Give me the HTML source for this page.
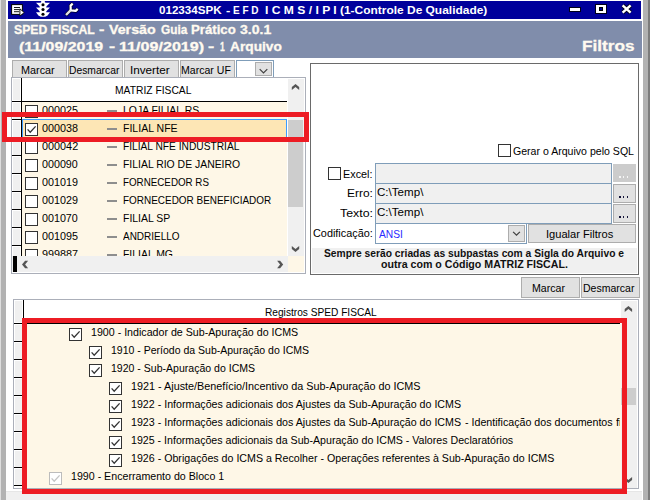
<!DOCTYPE html>
<html><head><meta charset="utf-8"><title>SPED FISCAL</title>
<style>
html,body{margin:0;padding:0;background:#fff;}
body{width:650px;height:500px;position:relative;overflow:hidden;font-family:"Liberation Sans",sans-serif;}
.r{position:absolute;box-sizing:content-box;}
.t{position:absolute;white-space:nowrap;line-height:20px;transform-origin:0 0;font-family:"Liberation Sans",sans-serif;}
</style></head><body>
<div class="r" style="left:0px;top:0px;width:650px;height:500px;background:#ffffff;"></div>
<div class="r" style="left:0px;top:0px;width:1px;height:500px;background:#dedede;"></div>
<div class="r" style="left:1px;top:0px;width:5px;height:500px;background:#b2b2b2;"></div>
<div class="r" style="left:643px;top:0px;width:5px;height:500px;background:#b2b2b2;"></div>
<div class="r" style="left:648px;top:0px;width:2px;height:500px;background:#7c7c7c;"></div>
<div class="r" style="left:8px;top:1px;width:633px;height:18px;background:#00009b;"></div>
<div class="r" style="left:8px;top:21px;width:634px;height:37px;background:#808dab;"></div>
<div class="r" style="left:6px;top:491px;width:636px;height:9px;background:#f0f0f0;"></div>
<div class="r" style="left:6px;top:491px;width:636px;height:1px;background:#e6e6e6;"></div>
<span class="t" style="left:159.00px;top:0.00px;font-size:11px;font-weight:bold;color:#ffffff;transform:scaleX(1.0548);">012334SPK</span>
<span class="t" style="left:226.00px;top:0.00px;font-size:11px;font-weight:bold;color:#ffffff;transform:scaleX(1.1870);">-</span>
<span class="t" style="left:233.00px;top:0.00px;font-size:11px;font-weight:bold;color:#ffffff;transform:scaleX(0.9087);">E F D</span>
<span class="t" style="left:265.00px;top:0.00px;font-size:11px;font-weight:bold;color:#ffffff;transform:scaleX(1.1002);">I C M S / I P I</span>
<span class="t" style="left:340.00px;top:0.00px;font-size:11px;font-weight:bold;color:#ffffff;transform:scaleX(1.0856);">(1-Controle De Qualidade)</span>
<span class="t" style="left:14.00px;top:20.00px;font-size:12.5px;font-weight:bold;color:#fffaf0;transform:scaleX(0.9763);-webkit-text-stroke:0.3px #fffaf0;">SPED FISCAL</span>
<span class="t" style="left:99.00px;top:20.00px;font-size:12.5px;font-weight:bold;color:#fffaf0;transform:scaleX(1.2962);-webkit-text-stroke:0.3px #fffaf0;">-</span>
<span class="t" style="left:109.00px;top:20.00px;font-size:12.5px;font-weight:bold;color:#fffaf0;transform:scaleX(1.1376);-webkit-text-stroke:0.3px #fffaf0;">Versão</span>
<span class="t" style="left:161.00px;top:20.00px;font-size:12.5px;font-weight:bold;color:#fffaf0;transform:scaleX(0.9477);-webkit-text-stroke:0.3px #fffaf0;">Guia</span>
<span class="t" style="left:191.00px;top:20.00px;font-size:12.5px;font-weight:bold;color:#fffaf0;transform:scaleX(1.0554);-webkit-text-stroke:0.3px #fffaf0;">Prático</span>
<span class="t" style="left:240.00px;top:20.00px;font-size:12.5px;font-weight:bold;color:#fffaf0;transform:scaleX(1.1226);-webkit-text-stroke:0.3px #fffaf0;">3.0.1</span>
<span class="t" style="left:19.00px;top:37.00px;font-size:12.5px;font-weight:bold;color:#fffaf0;transform:scaleX(1.2738);-webkit-text-stroke:0.3px #fffaf0;">(11/09/2019</span>
<span class="t" style="left:109.00px;top:37.00px;font-size:12.5px;font-weight:bold;color:#fffaf0;transform:scaleX(1.4730);-webkit-text-stroke:0.3px #fffaf0;">-</span>
<span class="t" style="left:119.00px;top:37.00px;font-size:12.5px;font-weight:bold;color:#fffaf0;transform:scaleX(1.2894);-webkit-text-stroke:0.3px #fffaf0;">11/09/2019)</span>
<span class="t" style="left:208.00px;top:37.00px;font-size:12.5px;font-weight:bold;color:#fffaf0;transform:scaleX(1.5000);-webkit-text-stroke:0.3px #fffaf0;">-</span>
<span class="t" style="left:220.00px;top:37.00px;font-size:12.5px;font-weight:bold;color:#fffaf0;transform:scaleX(0.6837);-webkit-text-stroke:0.3px #fffaf0;">1</span>
<span class="t" style="left:230.00px;top:37.00px;font-size:12.5px;font-weight:bold;color:#fffaf0;transform:scaleX(1.0984);-webkit-text-stroke:0.3px #fffaf0;">Arquivo</span>
<span class="t" style="left:582.00px;top:36.00px;font-size:15px;font-weight:bold;color:#fffaf0;transform:scaleX(1.1469);-webkit-text-stroke:0.3px #fffaf0;">Filtros</span>
<div class="r" style="left:570px;top:8px;width:10px;height:3px;background:#fff;box-shadow:0 0 0 1px #000018;"></div>
<div class="r" style="left:596px;top:5px;width:4px;height:4px;border:2px solid #fff;border-left-width:3px;border-right-width:3px;box-shadow:inset 0 0 0 1px #000,0 0 0 1px #000018;"></div>
<svg class="r" style="left:618px;top:2px" width="18" height="14" viewBox="0 0 18 14"><path d="M4.6 3.4 L12.6 10.6 M12.6 3.4 L4.6 10.6" stroke="#000018" stroke-width="4.2" fill="none"/><path d="M4.6 3.4 L12.6 10.6 M12.6 3.4 L4.6 10.6" stroke="#fff" stroke-width="2.5" fill="none"/></svg>
<svg class="r" style="left:0;top:0" width="90" height="20" viewBox="0 0 90 20">
<rect x="11.6" y="4.6" width="10.8" height="9.8" fill="#fff" stroke="#000" stroke-width="1"/>
<path d="M14 7.5 H20 M14 9.6 H19.6 M14 11.7 H19.2" stroke="#000" stroke-width="0.9" fill="none"/>
<path d="M19.9 8.9 L24.3 12.5 L19.9 16.1 Z" fill="#fff" stroke="#000" stroke-width="0.9"/>
<g fill="#fff">
<rect x="41.2" y="0" width="3.6" height="4"/>
<rect x="39.8" y="2.2" width="6.4" height="14.6" rx="1.6"/>
<path d="M36 2.8 L40.4 2.8 V7.2 Z M36 7.5 L40.4 7.5 V11.9 Z M36 12.2 L40.4 12.2 V16.6 L38.4 15.6 Z"/>
<path d="M50 2.8 L45.6 2.8 V7.2 Z M50 7.5 L45.6 7.5 V11.9 Z M50 12.2 L45.6 12.2 V16.6 L47.6 15.6 Z"/>
</g>
<g fill="#000"><circle cx="43" cy="4.7" r="1.55"/><circle cx="43" cy="9.5" r="1.55"/><circle cx="43" cy="14.3" r="1.55"/></g>
<g fill="none" stroke-linejoin="round" stroke-linecap="butt">
<path d="M72.9 3.4 L70.6 5.6 L70.7 10.3 L75.7 10.9 L77.9 8.7 M70.5 10.4 L65.8 15.2" stroke="#000020" stroke-width="3.6"/>
<path d="M72.7 3.6 L70.6 5.6 L70.7 10.3 L75.7 10.9 L77.7 8.9" stroke="#fff" stroke-width="2.2"/>
<path d="M70.5 10.4 L66 15" stroke="#e2e2e2" stroke-width="2.4"/>
</g>
</svg>
<div class="r" style="left:12px;top:60px;width:53px;height:16px;background:#e1e1e1;border:1px solid #adadad;"></div>
<span class="t" style="left:21.00px;top:60.00px;font-size:11.5px;color:#000000;transform:scaleX(0.9409);">Marcar</span>
<div class="r" style="left:68px;top:60px;width:53px;height:16px;background:#e1e1e1;border:1px solid #adadad;"></div>
<span class="t" style="left:69.00px;top:60.00px;font-size:11.5px;color:#000000;transform:scaleX(0.8954);">Desmarcar</span>
<div class="r" style="left:124px;top:60px;width:53px;height:16px;background:#e1e1e1;border:1px solid #adadad;"></div>
<span class="t" style="left:130.00px;top:60.00px;font-size:11.5px;color:#000000;transform:scaleX(1.0170);">Inverter</span>
<div class="r" style="left:180px;top:60px;width:53px;height:16px;background:#e1e1e1;border:1px solid #adadad;"></div>
<span class="t" style="left:181.00px;top:60.00px;font-size:11.5px;color:#000000;transform:scaleX(0.9182);">Marcar UF</span>
<div class="r" style="left:236px;top:60px;width:36px;height:16px;background:#fff;border:1px solid #7f9db9;"></div>
<div class="r" style="left:255px;top:62px;width:15px;height:12px;background:#e1e1e1;border:1px solid #adadad;"></div>
<svg class="r" style="left:0;top:0" width="650" height="500"><path d="M259.7 69.1 L263.5 72.9 L267.3 69.1" fill="none" stroke="#404040" stroke-width="1.2"/></svg>
<div class="r" style="left:11px;top:77px;width:293px;height:195px;background:#fff;border:1px solid #abafb9;"></div>
<div class="r" style="left:13px;top:79px;width:7px;height:21px;background:#f0f0f0;"></div>
<div class="r" style="left:21px;top:78px;width:1px;height:178px;background:#000;"></div>
<div class="r" style="left:12px;top:101px;width:275px;height:1px;background:#000;"></div>
<span class="t" style="left:115.00px;top:80.00px;font-size:11px;color:#000000;transform:scaleX(0.9354);">MATRIZ FISCAL</span>
<div class="r" style="left:22px;top:102px;width:265px;height:154px;background:#fef7e7;"></div>
<div class="r" style="left:22px;top:119px;width:263px;height:17px;background:#fde6b5;border:1px solid #3c9bff;"></div>
<div class="r" style="left:12px;top:102px;width:276px;height:154px;overflow:hidden;background:none">
<div class="r" style="left:0px;top:17px;width:9px;height:1px;background:#000;"></div>
<div class="r" style="left:1px;top:1px;width:7px;height:16px;background:#f0f0f0;"></div>
<div class="r" style="left:13px;top:3px;width:11px;height:11px;background:#fff;border:1px solid #333333;"></div>
<span class="t" style="left:30.00px;top:-2.00px;font-size:11px;color:#000000;transform:scaleX(0.9798);">000025</span>
<div class="r" style="left:95px;top:8px;width:10px;height:2px;background:#8e8e8e;"></div>
<span class="t" style="left:111.00px;top:-2.00px;font-size:11px;color:#000000;transform:scaleX(0.9481);">LOJA FILIAL RS</span>
<div class="r" style="left:0px;top:35px;width:9px;height:1px;background:#000;"></div>
<div class="r" style="left:1px;top:19px;width:7px;height:16px;background:#f0f0f0;"></div>
<div class="r" style="left:13px;top:21px;width:11px;height:11px;background:#fff;border:1px solid #333333;"><svg width="11" height="11" viewBox="0 0 11 11" style="position:absolute;left:0;top:0"><path d="M1.6 5.4 L4.2 8.2 L9.6 2.4" fill="none" stroke="#333333" stroke-width="1.3"/></svg></div>
<span class="t" style="left:30.00px;top:16.00px;font-size:11px;color:#000000;transform:scaleX(0.9801);">000038</span>
<div class="r" style="left:95px;top:26px;width:10px;height:2px;background:#8e8e8e;"></div>
<span class="t" style="left:111.00px;top:16.00px;font-size:11px;color:#000000;transform:scaleX(0.9571);">FILIAL NFE</span>
<div class="r" style="left:0px;top:53px;width:9px;height:1px;background:#000;"></div>
<div class="r" style="left:1px;top:37px;width:7px;height:16px;background:#f0f0f0;"></div>
<div class="r" style="left:13px;top:39px;width:11px;height:11px;background:#fff;border:1px solid #333333;"></div>
<span class="t" style="left:30.00px;top:34.00px;font-size:11px;color:#000000;transform:scaleX(0.9851);">000042</span>
<div class="r" style="left:95px;top:44px;width:10px;height:2px;background:#8e8e8e;"></div>
<span class="t" style="left:111.00px;top:34.00px;font-size:11px;color:#000000;transform:scaleX(0.9272);">FILIAL NFE INDUSTRIAL</span>
<div class="r" style="left:0px;top:71px;width:9px;height:1px;background:#000;"></div>
<div class="r" style="left:1px;top:55px;width:7px;height:16px;background:#f0f0f0;"></div>
<div class="r" style="left:13px;top:57px;width:11px;height:11px;background:#fff;border:1px solid #333333;"></div>
<span class="t" style="left:30.00px;top:52.00px;font-size:11px;color:#000000;transform:scaleX(0.9748);">000090</span>
<div class="r" style="left:95px;top:62px;width:10px;height:2px;background:#8e8e8e;"></div>
<span class="t" style="left:111.00px;top:52.00px;font-size:11px;color:#000000;transform:scaleX(0.9472);">FILIAL RIO DE JANEIRO</span>
<div class="r" style="left:0px;top:89px;width:9px;height:1px;background:#000;"></div>
<div class="r" style="left:1px;top:73px;width:7px;height:16px;background:#f0f0f0;"></div>
<div class="r" style="left:13px;top:75px;width:11px;height:11px;background:#fff;border:1px solid #333333;"></div>
<span class="t" style="left:30.00px;top:70.00px;font-size:11px;color:#000000;transform:scaleX(0.9780);">001019</span>
<div class="r" style="left:95px;top:80px;width:10px;height:2px;background:#8e8e8e;"></div>
<span class="t" style="left:111.00px;top:70.00px;font-size:11px;color:#000000;transform:scaleX(0.8903);">FORNECEDOR RS</span>
<div class="r" style="left:0px;top:107px;width:9px;height:1px;background:#000;"></div>
<div class="r" style="left:1px;top:91px;width:7px;height:16px;background:#f0f0f0;"></div>
<div class="r" style="left:13px;top:93px;width:11px;height:11px;background:#fff;border:1px solid #333333;"></div>
<span class="t" style="left:30.00px;top:88.00px;font-size:11px;color:#000000;transform:scaleX(0.9780);">001029</span>
<div class="r" style="left:95px;top:98px;width:10px;height:2px;background:#8e8e8e;"></div>
<span class="t" style="left:111.00px;top:88.00px;font-size:11px;color:#000000;transform:scaleX(0.9044);">FORNECEDOR BENEFICIADOR</span>
<div class="r" style="left:0px;top:125px;width:9px;height:1px;background:#000;"></div>
<div class="r" style="left:1px;top:109px;width:7px;height:16px;background:#f0f0f0;"></div>
<div class="r" style="left:13px;top:111px;width:11px;height:11px;background:#fff;border:1px solid #333333;"></div>
<span class="t" style="left:30.00px;top:106.00px;font-size:11px;color:#000000;transform:scaleX(0.9748);">001070</span>
<div class="r" style="left:95px;top:116px;width:10px;height:2px;background:#8e8e8e;"></div>
<span class="t" style="left:111.00px;top:106.00px;font-size:11px;color:#000000;transform:scaleX(0.9490);">FILIAL SP</span>
<div class="r" style="left:0px;top:143px;width:9px;height:1px;background:#000;"></div>
<div class="r" style="left:1px;top:127px;width:7px;height:16px;background:#f0f0f0;"></div>
<div class="r" style="left:13px;top:129px;width:11px;height:11px;background:#fff;border:1px solid #333333;"></div>
<span class="t" style="left:30.00px;top:124.00px;font-size:11px;color:#000000;transform:scaleX(0.9798);">001095</span>
<div class="r" style="left:95px;top:134px;width:10px;height:2px;background:#8e8e8e;"></div>
<span class="t" style="left:111.00px;top:124.00px;font-size:11px;color:#000000;transform:scaleX(0.9059);">ANDRIELLO</span>
<div class="r" style="left:0px;top:161px;width:9px;height:1px;background:#000;"></div>
<div class="r" style="left:1px;top:145px;width:7px;height:16px;background:#f0f0f0;"></div>
<div class="r" style="left:13px;top:147px;width:11px;height:11px;background:#fff;border:1px solid #333333;"></div>
<span class="t" style="left:30.00px;top:142.00px;font-size:11px;color:#000000;transform:scaleX(0.9802);">999887</span>
<div class="r" style="left:95px;top:152px;width:10px;height:2px;background:#8e8e8e;"></div>
<span class="t" style="left:111.00px;top:142.00px;font-size:11px;color:#000000;transform:scaleX(0.9466);">FILIAL MG</span>
</div>
<div class="r" style="left:288px;top:79px;width:16px;height:177px;background:#f0f0f0;"></div>
<div class="r" style="left:288px;top:120px;width:15px;height:87px;background:#cdcdcd;"></div>
<svg class="r" style="left:0;top:0" width="650" height="500"><polygon points="295.50,83.90 299.20,87.00 299.20,90.00 295.50,87.00 291.80,90.00 291.80,87.00" fill="#555555"/></svg>
<svg class="r" style="left:0;top:0" width="650" height="500"><polygon points="295.50,252.10 299.20,249.00 299.20,246.00 295.50,249.00 291.80,246.00 291.80,249.00" fill="#555555"/></svg>
<div class="r" style="left:12px;top:256px;width:276px;height:16px;background:#f0f0f0;"></div>
<div class="r" style="left:13px;top:256px;width:4px;height:16px;background:#000;"></div>
<div class="r" style="left:288px;top:256px;width:16px;height:16px;background:#fef7e7;"></div>
<svg class="r" style="left:0;top:0" width="650" height="500"><polygon points="22.00,264.50 25.10,268.20 28.10,268.20 25.10,264.50 28.10,260.80 25.10,260.80" fill="#555555"/></svg>
<svg class="r" style="left:0;top:0" width="650" height="500"><polygon points="283.20,264.50 280.10,268.20 277.10,268.20 280.10,264.50 277.10,260.80 280.10,260.80" fill="#555555"/></svg>
<div class="r" style="left:310px;top:63px;width:327px;height:210px;background:#fff;border:1px solid #6a6a6a;"></div>
<div class="r" style="left:312px;top:248px;width:325px;height:25px;background:#f0f0f0;"></div>
<div class="r" style="left:498px;top:144px;width:11px;height:11px;background:#fff;border:1px solid #333333;"></div>
<span class="t" style="left:513.00px;top:141.00px;font-size:11.5px;color:#000000;transform:scaleX(0.9188);">Gerar o Arquivo pelo SQL</span>
<div class="r" style="left:328px;top:167px;width:11px;height:11px;background:#fff;border:1px solid #333333;"></div>
<span class="t" style="left:343.00px;top:164.00px;font-size:11.5px;color:#000000;transform:scaleX(0.9426);">Excel:</span>
<span class="t" style="left:347.00px;top:183.00px;font-size:11.5px;color:#000000;transform:scaleX(1.0370);">Erro:</span>
<span class="t" style="left:340.00px;top:203.00px;font-size:11.5px;color:#000000;transform:scaleX(1.0742);">Texto:</span>
<span class="t" style="left:313.00px;top:223.00px;font-size:11.5px;color:#000000;transform:scaleX(0.9439);">Codificação:</span>
<div class="r" style="left:375px;top:163px;width:235px;height:19px;background:#f0f0f0;border:1px solid #7f9db9;"></div>
<div class="r" style="left:375px;top:183px;width:235px;height:19px;background:#f0f0f0;border:1px solid #7f9db9;"></div>
<div class="r" style="left:375px;top:203px;width:235px;height:19px;background:#f0f0f0;border:1px solid #7f9db9;"></div>
<div class="r" style="left:375px;top:223px;width:150px;height:19px;background:#fff;border:1px solid #7f9db9;"></div>
<span class="t" style="left:377.00px;top:182.00px;font-size:11.5px;color:#000000;transform:scaleX(1.0076);">C:\Temp\</span>
<span class="t" style="left:377.00px;top:202.00px;font-size:11.5px;color:#000000;transform:scaleX(1.0076);">C:\Temp\</span>
<span class="t" style="left:379.00px;top:224.00px;font-size:11px;color:#2a2aff;transform:scaleX(0.9281);">ANSI</span>
<div class="r" style="left:613px;top:164px;width:23px;height:18px;background:#cccccc;"></div>
<div class="r" style="left:619px;top:176px;width:1.5px;height:2px;background:#f6f6f6;"></div>
<div class="r" style="left:622.8px;top:176px;width:1.5px;height:2px;background:#f6f6f6;"></div>
<div class="r" style="left:626.8px;top:176px;width:1.5px;height:2px;background:#f6f6f6;"></div>
<div class="r" style="left:613px;top:184px;width:21px;height:17px;background:#e1e1e1;border:1px solid #adadad;"></div>
<div class="r" style="left:619px;top:196px;width:1.5px;height:2px;background:#15153a;"></div>
<div class="r" style="left:622.8px;top:196px;width:1.5px;height:2px;background:#15153a;"></div>
<div class="r" style="left:626.8px;top:196px;width:1.5px;height:2px;background:#15153a;"></div>
<div class="r" style="left:613px;top:204px;width:21px;height:17px;background:#e1e1e1;border:1px solid #adadad;"></div>
<div class="r" style="left:619px;top:216px;width:1.5px;height:2px;background:#15153a;"></div>
<div class="r" style="left:622.8px;top:216px;width:1.5px;height:2px;background:#15153a;"></div>
<div class="r" style="left:626.8px;top:216px;width:1.5px;height:2px;background:#15153a;"></div>
<div class="r" style="left:508px;top:225px;width:15px;height:15px;background:#e1e1e1;border:1px solid #adadad;"></div>
<svg class="r" style="left:0;top:0" width="650" height="500"><path d="M513.1 231.8 L516.5 235.2 L519.9 231.8" fill="none" stroke="#404040" stroke-width="1.2"/></svg>
<div class="r" style="left:528px;top:224px;width:106px;height:17px;background:#e1e1e1;border:1px solid #adadad;"></div>
<span class="t" style="left:546.00px;top:224.00px;font-size:11.5px;color:#000000;transform:scaleX(0.9659);">Igualar Filtros</span>
<span class="t" style="left:324.00px;top:244.00px;font-size:10px;font-weight:bold;color:#111;transform:scaleX(1.0275);">Sempre serão criadas as subpastas com a Sigla do Arquivo e</span>
<span class="t" style="left:381.00px;top:255.00px;font-size:10px;font-weight:bold;color:#111;transform:scaleX(1.0625);">outra com o Código MATRIZ FISCAL.</span>
<div class="r" style="left:521px;top:277px;width:57px;height:19px;background:#e1e1e1;border:1px solid #adadad;"></div>
<span class="t" style="left:532.00px;top:278.00px;font-size:11.5px;color:#000000;transform:scaleX(0.9206);">Marcar</span>
<div class="r" style="left:581px;top:277px;width:57px;height:19px;background:#e1e1e1;border:1px solid #adadad;"></div>
<span class="t" style="left:583.00px;top:278.00px;font-size:11.5px;color:#000000;transform:scaleX(0.9140);">Desmarcar</span>
<div class="r" style="left:13px;top:299px;width:624px;height:188px;background:#fff;border:1px solid #abafb9;"></div>
<div class="r" style="left:15px;top:301px;width:7px;height:21px;background:#f0f0f0;"></div>
<div class="r" style="left:23px;top:300px;width:1px;height:188px;background:#000;"></div>
<div class="r" style="left:14px;top:323px;width:606px;height:1px;background:#000;"></div>
<div class="r" style="left:24px;top:324px;width:597px;height:164px;background:#fef7e7;"></div>
<span class="t" style="left:265.00px;top:302.00px;font-size:11.5px;color:#000000;transform:scaleX(0.8827);">Registros SPED FISCAL</span>
<div class="r" style="left:621px;top:301px;width:16px;height:187px;background:#f0f0f0;"></div>
<div class="r" style="left:621px;top:388px;width:15px;height:17px;background:#cdcdcd;"></div>
<svg class="r" style="left:0;top:0" width="650" height="500"><polygon points="628.40,305.90 632.10,309.00 632.10,312.00 628.40,309.00 624.70,312.00 624.70,309.00" fill="#555555"/></svg>
<svg class="r" style="left:0;top:0" width="650" height="500"><polygon points="628.40,483.10 632.10,480.00 632.10,477.00 628.40,480.00 624.70,477.00 624.70,480.00" fill="#555555"/></svg>
<div class="r" style="left:14px;top:324px;width:606px;height:164px;overflow:hidden;background:none">
<div class="r" style="left:0px;top:17px;width:9px;height:1px;background:#000;"></div>
<div class="r" style="left:1px;top:1px;width:7px;height:16px;background:#f0f0f0;"></div>
<div class="r" style="left:55px;top:4px;width:11px;height:11px;background:#fff;border:1px solid #333333;"><svg width="11" height="11" viewBox="0 0 11 11" style="position:absolute;left:0;top:0"><path d="M1.6 5.4 L4.2 8.2 L9.6 2.4" fill="none" stroke="#333333" stroke-width="1.3"/></svg></div>
<span class="t" style="left:77.00px;top:-2.00px;font-size:11.5px;color:#000000;transform:scaleX(0.9258);">1900 - Indicador de Sub-Apuração do ICMS</span>
<div class="r" style="left:0px;top:35px;width:9px;height:1px;background:#000;"></div>
<div class="r" style="left:1px;top:19px;width:7px;height:16px;background:#f0f0f0;"></div>
<div class="r" style="left:75px;top:22px;width:11px;height:11px;background:#fff;border:1px solid #333333;"><svg width="11" height="11" viewBox="0 0 11 11" style="position:absolute;left:0;top:0"><path d="M1.6 5.4 L4.2 8.2 L9.6 2.4" fill="none" stroke="#333333" stroke-width="1.3"/></svg></div>
<span class="t" style="left:97.00px;top:16.00px;font-size:11.5px;color:#000000;transform:scaleX(0.9136);">1910 - Período da Sub-Apuração do ICMS</span>
<div class="r" style="left:0px;top:53px;width:9px;height:1px;background:#000;"></div>
<div class="r" style="left:1px;top:37px;width:7px;height:16px;background:#f0f0f0;"></div>
<div class="r" style="left:75px;top:40px;width:11px;height:11px;background:#fff;border:1px solid #333333;"><svg width="11" height="11" viewBox="0 0 11 11" style="position:absolute;left:0;top:0"><path d="M1.6 5.4 L4.2 8.2 L9.6 2.4" fill="none" stroke="#333333" stroke-width="1.3"/></svg></div>
<span class="t" style="left:97.00px;top:34.00px;font-size:11.5px;color:#000000;transform:scaleX(0.9162);">1920 - Sub-Apuração do ICMS</span>
<div class="r" style="left:0px;top:71px;width:9px;height:1px;background:#000;"></div>
<div class="r" style="left:1px;top:55px;width:7px;height:16px;background:#f0f0f0;"></div>
<div class="r" style="left:95px;top:58px;width:11px;height:11px;background:#fff;border:1px solid #333333;"><svg width="11" height="11" viewBox="0 0 11 11" style="position:absolute;left:0;top:0"><path d="M1.6 5.4 L4.2 8.2 L9.6 2.4" fill="none" stroke="#333333" stroke-width="1.3"/></svg></div>
<span class="t" style="left:117.00px;top:52.00px;font-size:11.5px;color:#000000;transform:scaleX(0.9394);">1921 - Ajuste/Benefício/Incentivo da Sub-Apuração do ICMS</span>
<div class="r" style="left:0px;top:89px;width:9px;height:1px;background:#000;"></div>
<div class="r" style="left:1px;top:73px;width:7px;height:16px;background:#f0f0f0;"></div>
<div class="r" style="left:95px;top:76px;width:11px;height:11px;background:#fff;border:1px solid #333333;"><svg width="11" height="11" viewBox="0 0 11 11" style="position:absolute;left:0;top:0"><path d="M1.6 5.4 L4.2 8.2 L9.6 2.4" fill="none" stroke="#333333" stroke-width="1.3"/></svg></div>
<span class="t" style="left:117.00px;top:70.00px;font-size:11.5px;color:#000000;transform:scaleX(0.9269);">1922 - Informações adicionais dos Ajustes da Sub-Apuração do ICMS</span>
<div class="r" style="left:0px;top:107px;width:9px;height:1px;background:#000;"></div>
<div class="r" style="left:1px;top:91px;width:7px;height:16px;background:#f0f0f0;"></div>
<div class="r" style="left:95px;top:94px;width:11px;height:11px;background:#fff;border:1px solid #333333;"><svg width="11" height="11" viewBox="0 0 11 11" style="position:absolute;left:0;top:0"><path d="M1.6 5.4 L4.2 8.2 L9.6 2.4" fill="none" stroke="#333333" stroke-width="1.3"/></svg></div>
<span class="t" style="left:117.00px;top:88.00px;font-size:11.5px;color:#000000;transform:scaleX(0.9269);">1923 - Informações adicionais dos Ajustes da Sub-Apuração do ICMS</span>
<span class="t" style="left:451.00px;top:88.00px;font-size:11.5px;color:#000000;transform:scaleX(0.9275);">- Identificação dos documentos</span>
<span class="t" style="left:602.00px;top:88.00px;font-size:11.5px;color:#000000;transform:scaleX(0.9700);">fiscais</span>
<div class="r" style="left:0px;top:125px;width:9px;height:1px;background:#000;"></div>
<div class="r" style="left:1px;top:109px;width:7px;height:16px;background:#f0f0f0;"></div>
<div class="r" style="left:95px;top:112px;width:11px;height:11px;background:#fff;border:1px solid #333333;"><svg width="11" height="11" viewBox="0 0 11 11" style="position:absolute;left:0;top:0"><path d="M1.6 5.4 L4.2 8.2 L9.6 2.4" fill="none" stroke="#333333" stroke-width="1.3"/></svg></div>
<span class="t" style="left:117.00px;top:106.00px;font-size:11.5px;color:#000000;transform:scaleX(0.9244);">1925 - Informações adicionais da Sub-Apuração do ICMS - Valores Declaratórios</span>
<div class="r" style="left:0px;top:143px;width:9px;height:1px;background:#000;"></div>
<div class="r" style="left:1px;top:127px;width:7px;height:16px;background:#f0f0f0;"></div>
<div class="r" style="left:95px;top:130px;width:11px;height:11px;background:#fff;border:1px solid #333333;"><svg width="11" height="11" viewBox="0 0 11 11" style="position:absolute;left:0;top:0"><path d="M1.6 5.4 L4.2 8.2 L9.6 2.4" fill="none" stroke="#333333" stroke-width="1.3"/></svg></div>
<span class="t" style="left:117.00px;top:124.00px;font-size:11.5px;color:#000000;transform:scaleX(0.9262);">1926 - Obrigações do ICMS a Recolher - Operações referentes à Sub-Apuração do ICMS</span>
<div class="r" style="left:0px;top:161px;width:9px;height:1px;background:#000;"></div>
<div class="r" style="left:1px;top:145px;width:7px;height:16px;background:#f0f0f0;"></div>
<div class="r" style="left:35px;top:148px;width:11px;height:11px;background:#fff;border:1px solid #bcbcbc;"><svg width="11" height="11" viewBox="0 0 11 11" style="position:absolute;left:0;top:0"><path d="M1.6 5.4 L4.2 8.2 L9.6 2.4" fill="none" stroke="#c4c4c4" stroke-width="1.3"/></svg></div>
<span class="t" style="left:57.00px;top:142.00px;font-size:11.5px;color:#000000;transform:scaleX(0.9252);">1990 - Encerramento do Bloco 1</span>
</div>
<div class="r" style="left:2px;top:112px;width:297px;height:20px;border:5px solid #ed1c24;background:none"></div>
<div class="r" style="left:22px;top:318px;width:595px;height:166px;border:5px solid #ed1c24;background:none"></div>
</body></html>
